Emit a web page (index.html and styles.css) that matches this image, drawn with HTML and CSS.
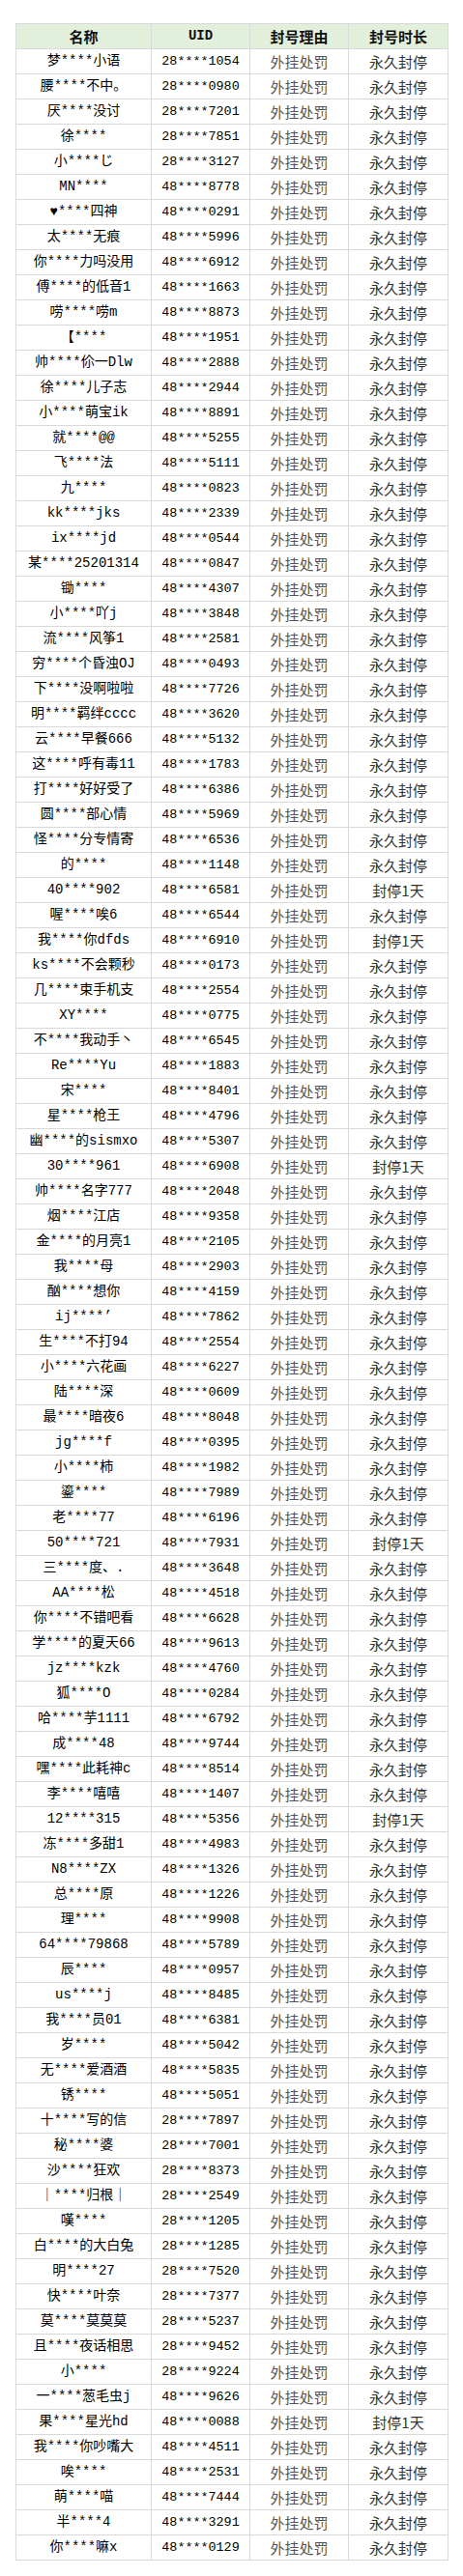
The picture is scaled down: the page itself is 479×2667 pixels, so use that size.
FILE: index.html
```html
<!DOCTYPE html>
<html lang="zh-CN">
<head>
<meta charset="utf-8">
<title>封号名单</title>
<link rel="stylesheet" href="styles.css">
</head>
<body>
<div class="page">
<table class="ban">
<colgroup><col class="c-name"><col class="c-uid"><col class="c-reason"><col class="c-dur"></colgroup>
<thead>
<tr><th class="h-cjk">名称</th><th class="h-uid">UID</th><th class="h-cjk">封号理由</th><th class="h-cjk">封号时长</th></tr>
</thead>
<tbody>
<tr><td class="name">梦****小语</td><td class="uid">28****1054</td><td class="reason">外挂处罚</td><td class="dur">永久封停</td></tr>
<tr><td class="name">腰****不中。</td><td class="uid">28****0980</td><td class="reason">外挂处罚</td><td class="dur">永久封停</td></tr>
<tr><td class="name">厌****没讨</td><td class="uid">28****7201</td><td class="reason">外挂处罚</td><td class="dur">永久封停</td></tr>
<tr><td class="name">徐****</td><td class="uid">28****7851</td><td class="reason">外挂处罚</td><td class="dur">永久封停</td></tr>
<tr><td class="name">小****じ</td><td class="uid">28****3127</td><td class="reason">外挂处罚</td><td class="dur">永久封停</td></tr>
<tr><td class="name">MN****</td><td class="uid">48****8778</td><td class="reason">外挂处罚</td><td class="dur">永久封停</td></tr>
<tr><td class="name">♥****四神</td><td class="uid">48****0291</td><td class="reason">外挂处罚</td><td class="dur">永久封停</td></tr>
<tr><td class="name">太****无痕</td><td class="uid">48****5996</td><td class="reason">外挂处罚</td><td class="dur">永久封停</td></tr>
<tr><td class="name">你****力吗没用</td><td class="uid">48****6912</td><td class="reason">外挂处罚</td><td class="dur">永久封停</td></tr>
<tr><td class="name">傅****的低音1</td><td class="uid">48****1663</td><td class="reason">外挂处罚</td><td class="dur">永久封停</td></tr>
<tr><td class="name">唠****唠m</td><td class="uid">48****8873</td><td class="reason">外挂处罚</td><td class="dur">永久封停</td></tr>
<tr><td class="name">【****</td><td class="uid">48****1951</td><td class="reason">外挂处罚</td><td class="dur">永久封停</td></tr>
<tr><td class="name">帅****伱一Dlw</td><td class="uid">48****2888</td><td class="reason">外挂处罚</td><td class="dur">永久封停</td></tr>
<tr><td class="name">徐****儿子志</td><td class="uid">48****2944</td><td class="reason">外挂处罚</td><td class="dur">永久封停</td></tr>
<tr><td class="name">小****萌宝ik</td><td class="uid">48****8891</td><td class="reason">外挂处罚</td><td class="dur">永久封停</td></tr>
<tr><td class="name">就****@@</td><td class="uid">48****5255</td><td class="reason">外挂处罚</td><td class="dur">永久封停</td></tr>
<tr><td class="name">飞****法</td><td class="uid">48****5111</td><td class="reason">外挂处罚</td><td class="dur">永久封停</td></tr>
<tr><td class="name">九****</td><td class="uid">48****0823</td><td class="reason">外挂处罚</td><td class="dur">永久封停</td></tr>
<tr><td class="name">kk****jks</td><td class="uid">48****2339</td><td class="reason">外挂处罚</td><td class="dur">永久封停</td></tr>
<tr><td class="name">ix****jd</td><td class="uid">48****0544</td><td class="reason">外挂处罚</td><td class="dur">永久封停</td></tr>
<tr><td class="name">某****25201314</td><td class="uid">48****0847</td><td class="reason">外挂处罚</td><td class="dur">永久封停</td></tr>
<tr><td class="name">锄****</td><td class="uid">48****4307</td><td class="reason">外挂处罚</td><td class="dur">永久封停</td></tr>
<tr><td class="name">小****吖j</td><td class="uid">48****3848</td><td class="reason">外挂处罚</td><td class="dur">永久封停</td></tr>
<tr><td class="name">流****风筝1</td><td class="uid">48****2581</td><td class="reason">外挂处罚</td><td class="dur">永久封停</td></tr>
<tr><td class="name">穷****个昏浊OJ</td><td class="uid">48****0493</td><td class="reason">外挂处罚</td><td class="dur">永久封停</td></tr>
<tr><td class="name">下****没啊啦啦</td><td class="uid">48****7726</td><td class="reason">外挂处罚</td><td class="dur">永久封停</td></tr>
<tr><td class="name">明****羁绊cccc</td><td class="uid">48****3620</td><td class="reason">外挂处罚</td><td class="dur">永久封停</td></tr>
<tr><td class="name">云****早餐666</td><td class="uid">48****5132</td><td class="reason">外挂处罚</td><td class="dur">永久封停</td></tr>
<tr><td class="name">这****呼有毒11</td><td class="uid">48****1783</td><td class="reason">外挂处罚</td><td class="dur">永久封停</td></tr>
<tr><td class="name">打****好好受了</td><td class="uid">48****6386</td><td class="reason">外挂处罚</td><td class="dur">永久封停</td></tr>
<tr><td class="name">圆****部心情</td><td class="uid">48****5969</td><td class="reason">外挂处罚</td><td class="dur">永久封停</td></tr>
<tr><td class="name">怪****分专情寄</td><td class="uid">48****6536</td><td class="reason">外挂处罚</td><td class="dur">永久封停</td></tr>
<tr><td class="name">的****</td><td class="uid">48****1148</td><td class="reason">外挂处罚</td><td class="dur">永久封停</td></tr>
<tr><td class="name">40****902</td><td class="uid">48****6581</td><td class="reason">外挂处罚</td><td class="dur">封停1天</td></tr>
<tr><td class="name">喔****唉6</td><td class="uid">48****6544</td><td class="reason">外挂处罚</td><td class="dur">永久封停</td></tr>
<tr><td class="name">我****你dfds</td><td class="uid">48****6910</td><td class="reason">外挂处罚</td><td class="dur">封停1天</td></tr>
<tr><td class="name">ks****不会颗秒</td><td class="uid">48****0173</td><td class="reason">外挂处罚</td><td class="dur">永久封停</td></tr>
<tr><td class="name">几****束手机支</td><td class="uid">48****2554</td><td class="reason">外挂处罚</td><td class="dur">永久封停</td></tr>
<tr><td class="name">XY****</td><td class="uid">48****0775</td><td class="reason">外挂处罚</td><td class="dur">永久封停</td></tr>
<tr><td class="name">不****我动手丶</td><td class="uid">48****6545</td><td class="reason">外挂处罚</td><td class="dur">永久封停</td></tr>
<tr><td class="name">Re****Yu</td><td class="uid">48****1883</td><td class="reason">外挂处罚</td><td class="dur">永久封停</td></tr>
<tr><td class="name">宋****</td><td class="uid">48****8401</td><td class="reason">外挂处罚</td><td class="dur">永久封停</td></tr>
<tr><td class="name">星****枪王</td><td class="uid">48****4796</td><td class="reason">外挂处罚</td><td class="dur">永久封停</td></tr>
<tr><td class="name">幽****的sismxo</td><td class="uid">48****5307</td><td class="reason">外挂处罚</td><td class="dur">永久封停</td></tr>
<tr><td class="name">30****961</td><td class="uid">48****6908</td><td class="reason">外挂处罚</td><td class="dur">封停1天</td></tr>
<tr><td class="name">帅****名字777</td><td class="uid">48****2048</td><td class="reason">外挂处罚</td><td class="dur">永久封停</td></tr>
<tr><td class="name">烟****江店</td><td class="uid">48****9358</td><td class="reason">外挂处罚</td><td class="dur">永久封停</td></tr>
<tr><td class="name">金****的月亮1</td><td class="uid">48****2105</td><td class="reason">外挂处罚</td><td class="dur">永久封停</td></tr>
<tr><td class="name">我****母</td><td class="uid">48****2903</td><td class="reason">外挂处罚</td><td class="dur">永久封停</td></tr>
<tr><td class="name">酗****想你</td><td class="uid">48****4159</td><td class="reason">外挂处罚</td><td class="dur">永久封停</td></tr>
<tr><td class="name">ij****’</td><td class="uid">48****7862</td><td class="reason">外挂处罚</td><td class="dur">永久封停</td></tr>
<tr><td class="name">生****不打94</td><td class="uid">48****2554</td><td class="reason">外挂处罚</td><td class="dur">永久封停</td></tr>
<tr><td class="name">小****六花画</td><td class="uid">48****6227</td><td class="reason">外挂处罚</td><td class="dur">永久封停</td></tr>
<tr><td class="name">陆****深</td><td class="uid">48****0609</td><td class="reason">外挂处罚</td><td class="dur">永久封停</td></tr>
<tr><td class="name">最****暗夜6</td><td class="uid">48****8048</td><td class="reason">外挂处罚</td><td class="dur">永久封停</td></tr>
<tr><td class="name">jg****f</td><td class="uid">48****0395</td><td class="reason">外挂处罚</td><td class="dur">永久封停</td></tr>
<tr><td class="name">小****柿</td><td class="uid">48****1982</td><td class="reason">外挂处罚</td><td class="dur">永久封停</td></tr>
<tr><td class="name">鎏****</td><td class="uid">48****7989</td><td class="reason">外挂处罚</td><td class="dur">永久封停</td></tr>
<tr><td class="name">老****77</td><td class="uid">48****6196</td><td class="reason">外挂处罚</td><td class="dur">永久封停</td></tr>
<tr><td class="name">50****721</td><td class="uid">48****7931</td><td class="reason">外挂处罚</td><td class="dur">封停1天</td></tr>
<tr><td class="name">三****度、.</td><td class="uid">48****3648</td><td class="reason">外挂处罚</td><td class="dur">永久封停</td></tr>
<tr><td class="name">AA****松</td><td class="uid">48****4518</td><td class="reason">外挂处罚</td><td class="dur">永久封停</td></tr>
<tr><td class="name">你****不错吧看</td><td class="uid">48****6628</td><td class="reason">外挂处罚</td><td class="dur">永久封停</td></tr>
<tr><td class="name">学****的夏天66</td><td class="uid">48****9613</td><td class="reason">外挂处罚</td><td class="dur">永久封停</td></tr>
<tr><td class="name">jz****kzk</td><td class="uid">48****4760</td><td class="reason">外挂处罚</td><td class="dur">永久封停</td></tr>
<tr><td class="name">狐****O</td><td class="uid">48****0284</td><td class="reason">外挂处罚</td><td class="dur">永久封停</td></tr>
<tr><td class="name">哈****芋1111</td><td class="uid">48****6792</td><td class="reason">外挂处罚</td><td class="dur">永久封停</td></tr>
<tr><td class="name">成****48</td><td class="uid">48****9744</td><td class="reason">外挂处罚</td><td class="dur">永久封停</td></tr>
<tr><td class="name">嘿****此耗神c</td><td class="uid">48****8514</td><td class="reason">外挂处罚</td><td class="dur">永久封停</td></tr>
<tr><td class="name">李****嘻嘻</td><td class="uid">48****1407</td><td class="reason">外挂处罚</td><td class="dur">永久封停</td></tr>
<tr><td class="name">12****315</td><td class="uid">48****5356</td><td class="reason">外挂处罚</td><td class="dur">封停1天</td></tr>
<tr><td class="name">冻****多甜1</td><td class="uid">48****4983</td><td class="reason">外挂处罚</td><td class="dur">永久封停</td></tr>
<tr><td class="name">N8****ZX</td><td class="uid">48****1326</td><td class="reason">外挂处罚</td><td class="dur">永久封停</td></tr>
<tr><td class="name">总****原</td><td class="uid">48****1226</td><td class="reason">外挂处罚</td><td class="dur">永久封停</td></tr>
<tr><td class="name">理****</td><td class="uid">48****9908</td><td class="reason">外挂处罚</td><td class="dur">永久封停</td></tr>
<tr><td class="name">64****79868</td><td class="uid">48****5789</td><td class="reason">外挂处罚</td><td class="dur">永久封停</td></tr>
<tr><td class="name">辰****</td><td class="uid">48****0957</td><td class="reason">外挂处罚</td><td class="dur">永久封停</td></tr>
<tr><td class="name">us****j</td><td class="uid">48****8485</td><td class="reason">外挂处罚</td><td class="dur">永久封停</td></tr>
<tr><td class="name">我****员01</td><td class="uid">48****6381</td><td class="reason">外挂处罚</td><td class="dur">永久封停</td></tr>
<tr><td class="name">岁****</td><td class="uid">48****5042</td><td class="reason">外挂处罚</td><td class="dur">永久封停</td></tr>
<tr><td class="name">无****爱酒酒</td><td class="uid">48****5835</td><td class="reason">外挂处罚</td><td class="dur">永久封停</td></tr>
<tr><td class="name">锈****</td><td class="uid">48****5051</td><td class="reason">外挂处罚</td><td class="dur">永久封停</td></tr>
<tr><td class="name">十****写的信</td><td class="uid">28****7897</td><td class="reason">外挂处罚</td><td class="dur">永久封停</td></tr>
<tr><td class="name">秘****婆</td><td class="uid">28****7001</td><td class="reason">外挂处罚</td><td class="dur">永久封停</td></tr>
<tr><td class="name">沙****狂欢</td><td class="uid">28****8373</td><td class="reason">外挂处罚</td><td class="dur">永久封停</td></tr>
<tr><td class="name">｜****归根｜</td><td class="uid">28****2549</td><td class="reason">外挂处罚</td><td class="dur">永久封停</td></tr>
<tr><td class="name">嘆****</td><td class="uid">28****1205</td><td class="reason">外挂处罚</td><td class="dur">永久封停</td></tr>
<tr><td class="name">白****的大白兔</td><td class="uid">28****1285</td><td class="reason">外挂处罚</td><td class="dur">永久封停</td></tr>
<tr><td class="name">明****27</td><td class="uid">28****7520</td><td class="reason">外挂处罚</td><td class="dur">永久封停</td></tr>
<tr><td class="name">快****叶奈</td><td class="uid">28****7377</td><td class="reason">外挂处罚</td><td class="dur">永久封停</td></tr>
<tr><td class="name">莫****莫莫莫</td><td class="uid">28****5237</td><td class="reason">外挂处罚</td><td class="dur">永久封停</td></tr>
<tr><td class="name">且****夜话相思</td><td class="uid">28****9452</td><td class="reason">外挂处罚</td><td class="dur">永久封停</td></tr>
<tr><td class="name">小****</td><td class="uid">28****9224</td><td class="reason">外挂处罚</td><td class="dur">永久封停</td></tr>
<tr><td class="name">一****葱毛虫j</td><td class="uid">48****9626</td><td class="reason">外挂处罚</td><td class="dur">永久封停</td></tr>
<tr><td class="name">果****星光hd</td><td class="uid">48****0088</td><td class="reason">外挂处罚</td><td class="dur">封停1天</td></tr>
<tr><td class="name">我****你吵嘴大</td><td class="uid">48****4511</td><td class="reason">外挂处罚</td><td class="dur">永久封停</td></tr>
<tr><td class="name">唉****</td><td class="uid">48****2531</td><td class="reason">外挂处罚</td><td class="dur">永久封停</td></tr>
<tr><td class="name">萌****喵</td><td class="uid">48****7444</td><td class="reason">外挂处罚</td><td class="dur">永久封停</td></tr>
<tr><td class="name">半****4</td><td class="uid">48****3291</td><td class="reason">外挂处罚</td><td class="dur">永久封停</td></tr>
<tr><td class="name">你****嘛x</td><td class="uid">48****0129</td><td class="reason">外挂处罚</td><td class="dur">永久封停</td></tr>
</tbody>
</table>
</div>
</body>
</html>
```

FILE: styles.css
```css
html, body {
  margin: 0;
  padding: 0;
  background: #ffffff;
}

.page {
  padding: 24px 16px 17px 16px;
}

.ban {
  border-collapse: collapse;
  table-layout: fixed;
  width: 447px;
}

.c-name { width: 140px; }
.c-uid { width: 102px; }
.c-reason { width: 102px; }
.c-dur { width: 103px; }

.ban th,
.ban td {
  border: 1px solid #d9d9d9;
  height: 25px;
  padding: 0;
  text-align: center;
  vertical-align: middle;
  white-space: nowrap;
  overflow: hidden;
  line-height: 25px;
}

.ban th {
  background: #e2efda;
  color: #111111;
  font-weight: bold;
}

.h-cjk {
  font-family: "Noto Sans CJK SC", sans-serif;
  font-size: 15px;
}

.h-uid {
  font-family: "Liberation Mono", "Noto Sans CJK SC", monospace;
  font-size: 14px;
}

.name {
  font-family: "Liberation Mono", "Noto Sans CJK SC", monospace;
  font-size: 14px;
  color: #000000;
}

.uid {
  font-family: "Liberation Mono", "Noto Sans CJK SC", monospace;
  font-size: 13.4px;
  color: #000000;
}

.reason {
  font-family: "Noto Sans CJK SC", sans-serif;
  font-size: 15px;
  color: #555555;
}

.dur {
  font-family: "Noto Sans CJK SC", sans-serif;
  font-size: 15px;
  color: #333333;
}
```
